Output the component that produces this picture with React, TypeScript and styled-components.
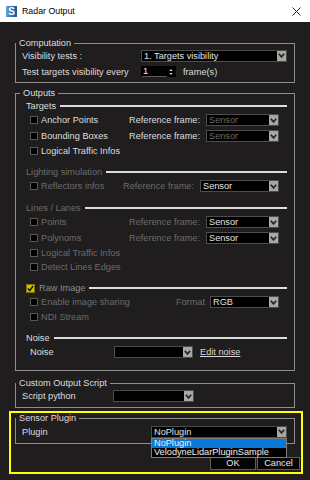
import React from 'react';
import styled, {createGlobalStyle} from "styled-components";

const GlobalStyle = createGlobalStyle`
  html, body {
    margin: 0;
    padding: 0;
    background: #1f1d1d;
  }
  body {
    font-family: "Liberation Sans", Arial, sans-serif;
    font-size: 9.2px;
    color: #dedede;
  }
  * {
    box-sizing: border-box;
  }
`

const Window = styled.div`
  width: 310px;
  height: 480px;
  display: flex;
  flex-direction: column;
  background: #1f1d1d;
  overflow: hidden;
`

const TitleBar = styled.div`
  height: 22px;
  flex-shrink: 0;
  background: #fff;
  display: flex;
  align-items: center;
  padding-left: 6px;
  color: #000;
  font-size: 8.8px;
`

const AppIcon = styled.span`
  width: 11px;
  height: 11px;
  margin-right: 5px;
  background: linear-gradient(90deg, #6aa8dc 0%, #2a73b8 45%, #1b5c9c 100%);
  color: #fff;
  font-weight: bold;
  font-size: 10px;
  line-height: 11px;
  text-align: center;
`

const CloseBtn = styled.span`
  margin-left: auto;
  margin-right: 9px;
  display: flex;
`

const Body = styled.div`
  display: flex;
  flex-direction: column;
  padding: 15px 15px 0;
`

const GroupBox = styled.fieldset<{ $pad: string; $mt?: number; $mr?: number }>`
  margin: ${p => p.$mt || 0}px ${p => p.$mr || 0}px 0 0;
  min-width: 0;
  border: 1px solid #8e8e8e;
  padding: ${p => p.$pad};
`

const Legend = styled.legend<{ $lh?: number }>`
  margin-left: -6px;
  padding: 0 3px;
  line-height: ${p => p.$lh || 12}px;
  height: ${p => p.$lh || 12}px;
  color: #dedede;
`

const FormGrid = styled.div<{ $col: number; $h: number }>`
  display: grid;
  grid-template-columns: ${p => p.$col}px 1fr;
  grid-auto-rows: ${p => p.$h}px;
  row-gap: 3px;
  align-items: center;
`

const Text = styled.span<{ $dim?: boolean; $mid?: boolean }>`
  color: ${p => p.$dim ? '#6c6c6c' : p.$mid ? '#8c8c8c' : '#dedede'};
  white-space: nowrap;
`

const ComboBox = styled.div<{ $w?: number; $dim?: boolean }>`
  position: relative;
  width: ${p => p.$w ? p.$w + 'px' : '100%'};
  height: 12px;
  flex-shrink: 0;
  background: #000;
  border: 1px solid #4c4c4c;
  color: ${p => p.$dim ? '#6a6a6a' : '#e4e4e4'};
  display: flex;
  align-items: center;
`

const ComboText = styled.span`
  flex: 1;
  padding-left: 2px;
  white-space: nowrap;
  overflow: hidden;
`

const ComboArrow = styled.span`
  width: 9px;
  align-self: stretch;
  background: #a8a8a0;
  display: flex;
  align-items: center;
  justify-content: center;
`

const Popup = styled.div`
  position: absolute;
  z-index: 2;
  top: calc(100% + 1px);
  left: -1px;
  right: -1px;
  background: #000;
  border: 1px solid #7c7c7c;
  display: flex;
  flex-direction: column;
`

const PopupItem = styled.div<{ $active?: boolean }>`
  height: 9px;
  line-height: 9px;
  padding-left: 2px;
  color: #f0f0f0;
  background: ${p => p.$active ? '#0a78d7' : 'transparent'};
  white-space: nowrap;
`

const SpinBox = styled.div`
  width: 35px;
  height: 11px;
  background: #000;
  display: flex;
  align-items: center;
  padding: 0 3px 0 1px;
`

const SpinField = styled.span`
  width: 25px;
  height: 10px;
  line-height: 9px;
  padding-left: 1px;
  border-bottom: 1px solid #5a5a5a;
  color: #f0f0f0;
`

const SpinGroup = styled.div`
  display: flex;
  align-items: center;
  gap: 7px;
`

const Section = styled.div<{ $first?: boolean }>`
  display: flex;
  flex-direction: column;
  margin-top: ${p => p.$first ? 0 : 8}px;
`

const SectionHead = styled.div<{ $dim?: boolean; $mid?: boolean }>`
  display: flex;
  align-items: center;
  height: 12px;
  gap: 4px;
  color: ${p => p.$dim ? '#6c6c6c' : p.$mid ? '#8c8c8c' : '#dedede'};
  white-space: nowrap;

  &::after {
    content: '';
    flex: 1;
    height: 2px;
    background: #dcdcdc;
  }
`

const CheckRow = styled.div<{ $h: number }>`
  height: ${p => p.$h}px;
  display: flex;
  align-items: center;
  justify-content: space-between;
  padding: 0 8px 0 4px;
`

const CheckLabel = styled.span`
  display: flex;
  align-items: center;
  gap: 3px;
`

const Box = styled.span<{ $checked?: boolean; $size?: number }>`
  width: ${p => p.$size || 8}px;
  height: ${p => p.$size || 8}px;
  flex-shrink: 0;
  background: ${p => p.$checked ? '#d2c000' : '#000'};
  border: 1px solid ${p => p.$checked ? '#7d7200' : '#585858'};
  display: flex;
  align-items: center;
  justify-content: center;
`

const RefGroup = styled.span<{ $gap?: number }>`
  display: flex;
  align-items: center;
  gap: ${p => p.$gap ?? 6}px;
`

const FieldRow = styled.div<{ $h: number; $label: number }>`
  height: ${p => p.$h}px;
  display: flex;
  align-items: center;

  > span:first-child {
    width: ${p => p.$label}px;
    flex-shrink: 0;
  }
`

const LinkText = styled.span`
  margin-left: 7px;
  color: #d8d8d8;
  text-decoration: underline;
`

const Highlight = styled.div`
  margin: 3px -8px 0 -6px;
  border: 2px solid #ffff00;
  padding: 0 1px 2px 4px;
  display: flex;
  flex-direction: column;
`

const PluginRow = styled.div`
  height: 15px;
  display: flex;
  align-items: center;
  justify-content: space-between;
`

const ButtonRow = styled.div`
  margin-top: 13px;
  display: flex;
  justify-content: flex-end;
  gap: 1px;
`

const DialogButton = styled.button<{ $w: number }>`
  width: ${p => p.$w}px;
  height: 13px;
  padding: 0;
  background: #050505;
  border: 1px solid #5c5c5c;
  color: #e8e8e8;
  font-family: inherit;
  font-size: 9.2px;
  line-height: 11px;
`

const Chevron = () => (
    <svg width="7" height="5" viewBox="0 0 7 5">
        <path d="M0.8 0.8 L3.5 3.9 L6.2 0.8" fill="none" stroke="#262626" strokeWidth="1.7"/>
    </svg>
)

const Combo = ({value, w, dim, children}: { value?: string, w?: number, dim?: boolean, children?: React.ReactNode }) => (
    <ComboBox $w={w} $dim={dim}>
        <ComboText>{value}</ComboText>
        <ComboArrow><Chevron/></ComboArrow>
        {children}
    </ComboBox>
)

const Check = ({checked, size}: { checked?: boolean, size?: number }) => (
    <Box $checked={checked} $size={size}>
        {checked && (
            <svg width="7" height="7" viewBox="0 0 7 7">
                <path d="M1 3.6 L2.8 5.6 L6 1" fill="none" stroke="#111" strokeWidth="1.5"/>
            </svg>
        )}
    </Box>
)

const App: React.FC = () => {
    return (
        <Window>
            <GlobalStyle/>
            <TitleBar>
                <AppIcon>S</AppIcon>
                <span>Radar Output</span>
                <CloseBtn>
                    <svg width="9" height="9" viewBox="0 0 9 9">
                        <path d="M0.5 0.5 L8.5 8.5 M8.5 0.5 L0.5 8.5" stroke="#222" strokeWidth="1"/>
                    </svg>
                </CloseBtn>
            </TitleBar>
            <Body>
                <GroupBox $pad="0 7px 4px 6px">
                    <Legend>Computation</Legend>
                    <FormGrid $col={119} $h={13}>
                        <Text>Visibility tests :</Text>
                        <Combo value="1. Targets visibility"/>
                        <Text>Test targets visibility every</Text>
                        <SpinGroup>
                            <SpinBox>
                                <SpinField>1</SpinField>
                                <svg width="4" height="8" viewBox="0 0 4 8" style={{marginLeft: 'auto'}}>
                                    <path d="M0.5 3 L2 1 L3.5 3 Z M0.5 5 L2 7 L3.5 5 Z" fill="#e8e8e8"/>
                                </svg>
                            </SpinBox>
                            <Text>frame(s)</Text>
                        </SpinGroup>
                    </FormGrid>
                </GroupBox>

                <GroupBox $pad="1px 7px 10px 10px" $mt={4}>
                    <Legend>Outputs</Legend>
                    <Section $first>
                        <SectionHead>Targets</SectionHead>
                        <CheckRow $h={16}>
                            <CheckLabel><Check/><Text>Anchor Points</Text></CheckLabel>
                            <RefGroup><Text>Reference frame:</Text><Combo w={73} value="Sensor" dim/></RefGroup>
                        </CheckRow>
                        <CheckRow $h={16}>
                            <CheckLabel><Check/><Text>Bounding Boxes</Text></CheckLabel>
                            <RefGroup><Text>Reference frame:</Text><Combo w={73} value="Sensor" dim/></RefGroup>
                        </CheckRow>
                        <CheckRow $h={14}>
                            <CheckLabel><Check/><Text>Logical Traffic Infos</Text></CheckLabel>
                        </CheckRow>
                    </Section>

                    <Section>
                        <SectionHead $dim>Lighting simulation</SectionHead>
                        <CheckRow $h={16}>
                            <CheckLabel><Check/><Text $dim>Reflectors infos</Text></CheckLabel>
                            <RefGroup><Text $dim>Reference frame:</Text><Combo w={79} value="Sensor"/></RefGroup>
                        </CheckRow>
                    </Section>

                    <Section>
                        <SectionHead $dim>Lines / Lanes</SectionHead>
                        <CheckRow $h={16}>
                            <CheckLabel><Check/><Text $dim>Points</Text></CheckLabel>
                            <RefGroup><Text $dim>Reference frame:</Text><Combo w={73} value="Sensor"/></RefGroup>
                        </CheckRow>
                        <CheckRow $h={16}>
                            <CheckLabel><Check/><Text $dim>Polynoms</Text></CheckLabel>
                            <RefGroup><Text $dim>Reference frame:</Text><Combo w={73} value="Sensor"/></RefGroup>
                        </CheckRow>
                        <CheckRow $h={14}>
                            <CheckLabel><Check/><Text $dim>Logical Traffic Infos</Text></CheckLabel>
                        </CheckRow>
                        <CheckRow $h={14}>
                            <CheckLabel><Check/><Text $dim>Detect Lines Edges</Text></CheckLabel>
                        </CheckRow>
                    </Section>

                    <Section>
                        <SectionHead $mid>
                            <CheckLabel style={{gap: 4}}><Check checked size={9}/>Raw Image</CheckLabel>
                        </SectionHead>
                        <CheckRow $h={16}>
                            <CheckLabel><Check/><Text $dim>Enable image sharing</Text></CheckLabel>
                            <RefGroup $gap={5}><Text $dim>Format</Text><Combo w={69} value="RGB"/></RefGroup>
                        </CheckRow>
                        <CheckRow $h={14}>
                            <CheckLabel><Check/><Text $dim>NDI Stream</Text></CheckLabel>
                        </CheckRow>
                    </Section>

                    <Section>
                        <SectionHead>Noise</SectionHead>
                        <CheckRow $h={16} style={{justifyContent: 'flex-start'}}>
                            <FieldRow $h={16} $label={84}>
                                <Text>Noise</Text>
                                <Combo w={79}/>
                                <LinkText>Edit noise</LinkText>
                            </FieldRow>
                        </CheckRow>
                    </Section>
                </GroupBox>

                <GroupBox $pad="0 7px 4px 6px" $mt={6}>
                    <Legend>Custom Output Script</Legend>
                    <FieldRow $h={14} $label={91}>
                        <Text>Script python</Text>
                        <Combo w={81}/>
                    </FieldRow>
                </GroupBox>

                <Highlight>
                    <GroupBox $pad="0 7px 4px 6px" $mr={5}>
                        <Legend $lh={11}>Sensor Plugin</Legend>
                        <PluginRow>
                            <Text>Plugin</Text>
                            <Combo w={136} value="NoPlugin">
                                <Popup>
                                    <PopupItem $active>NoPlugin</PopupItem>
                                    <PopupItem>VelodyneLidarPluginSample</PopupItem>
                                </Popup>
                            </Combo>
                        </PluginRow>
                    </GroupBox>
                    <ButtonRow>
                        <DialogButton $w={46}>OK</DialogButton>
                        <DialogButton $w={43}>Cancel</DialogButton>
                    </ButtonRow>
                </Highlight>
            </Body>
        </Window>
    )
}

export default App;
